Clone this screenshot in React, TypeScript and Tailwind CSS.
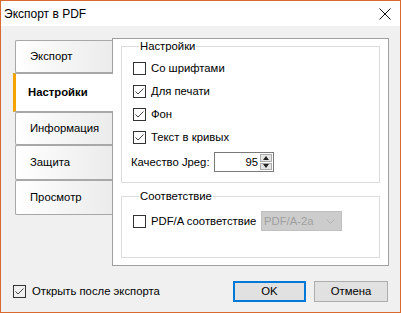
import { ReactNode } from "react";

const font = { fontFamily: '"Liberation Sans", Arial, sans-serif' };

function Check({ checked, className = "" }: { checked?: boolean; className?: string }) {
  return (
    <span
      className={`flex h-[13px] w-[13px] shrink-0 items-center justify-center border border-[#333333] ${className}`}
    >
      {checked && (
        <svg width="11" height="11" viewBox="0 0 11 11">
          <path d="M1.5 5.5 L4 8 L9.5 2.5" fill="none" stroke="#444" strokeWidth="1" />
        </svg>
      )}
    </span>
  );
}

function Row({ checked, label }: { checked?: boolean; label: string }) {
  return (
    <div className="flex h-[23px] items-center gap-[5px]">
      <Check checked={checked} className="bg-white" />
      <span>{label}</span>
    </div>
  );
}

function Group({ title, className, children }: { title: string; className: string; children: ReactNode }) {
  return (
    <fieldset className={`border border-[#dcdcdc] pl-[11px] ${className}`}>
      <legend className="ml-[6px] px-px leading-[15px]">{title}</legend>
      {children}
    </fieldset>
  );
}

const tabs = [
  { label: "Экспорт", h: "h-[33px]" },
  { label: "Настройки", h: "h-[39px]", active: true },
  { label: "Информация", h: "h-[33px]" },
  { label: "Защита", h: "h-[35px]" },
  { label: "Просмотр", h: "h-[35px]" },
];

export default function App() {
  return (
    <div
      className="flex h-[313px] w-[401px] flex-col border border-[#d9692c] text-[11.3px] text-black"
      style={font}
    >
      <div className="flex h-[25px] shrink-0 items-center justify-between bg-white pl-[3px] pr-[9px]">
        <span className="text-[12px]">Экспорт в PDF</span>
        <svg width="12" height="12" viewBox="0 0 12 12">
          <path d="M0.5 0.5 L11.5 11.5 M11.5 0.5 L0.5 11.5" stroke="#111" strokeWidth="1" />
        </svg>
      </div>

      <div className="flex flex-1 flex-col bg-[#f0f0f0] pt-[12px]">
        <div className="flex pl-[14px]">
          <div className="mt-[2px] flex w-[97px] flex-col">
            {tabs.map((t) =>
              t.active ? (
                <div
                  key={t.label}
                  className={`relative z-10 -ml-[2px] -mr-px flex ${t.h} items-center border-y border-l-[3px] border-y-[#a8a8a8] border-l-[#f5a300] bg-white pl-[12px] font-bold`}
                >
                  {t.label}
                </div>
              ) : (
                <div
                  key={t.label}
                  className={`flex ${t.h} items-center rounded-l-[2px] border border-r-0 border-[#a8a8a8] bg-gradient-to-r from-white to-[#ebebeb] pl-[14px]`}
                >
                  {t.label}
                </div>
              )
            )}
          </div>

          <div className="h-[228px] w-[277px] border border-[#a0a0a0] bg-white px-[8px]">
            <Group title="Настройки" className="h-[144px]">
              <div className="pt-[3px]">
                <Row label="Со шрифтами" />
                <Row checked label="Для печати" />
                <Row checked label="Фон" />
                <Row checked label="Текст в кривых" />
              </div>
              <div className="mt-[3px] flex h-[20px] items-center">
                <span className="-ml-[2px] w-[83px] shrink-0 whitespace-nowrap">Качество Jpeg:</span>
                <div className="flex h-[20px] w-[60px] items-center border border-[#7a7a7a] bg-white">
                  <span className="flex-1 pr-[2px] text-right">95</span>
                  <div className="mr-px flex h-[16px] w-[12px] flex-col gap-px">
                    <span className="flex flex-1 items-center justify-center border border-[#acacac] bg-[#e5e5e5]">
                      <svg width="6" height="4" viewBox="0 0 6 4">
                        <path d="M3 0 L6 4 L0 4 Z" fill="#222" />
                      </svg>
                    </span>
                    <span className="flex flex-1 items-center justify-center border border-[#acacac] bg-[#e5e5e5]">
                      <svg width="6" height="4" viewBox="0 0 6 4">
                        <path d="M0 0 L6 0 L3 4 Z" fill="#222" />
                      </svg>
                    </span>
                  </div>
                </div>
              </div>
            </Group>

            <Group title="Соответствие" className="mt-[6px] h-[69px]">
              <div className="mt-[7px] flex h-[20px] items-center">
                <Check className="bg-white" />
                <span className="ml-[5px] w-[110px] shrink-0 whitespace-nowrap">PDF/A соответствие</span>
                <div className="flex h-[20px] w-[81px] shrink-0 items-center justify-between border border-[#bfbfbf] bg-[#cccccc] pl-[2px] pr-[6px] text-[#a0a0a0]">
                  <span>PDF/A-2a</span>
                  <svg width="9" height="5" viewBox="0 0 9 5">
                    <path d="M0.5 0.5 L4.5 4.5 L8.5 0.5" fill="none" stroke="#b5b5b5" strokeWidth="1" />
                  </svg>
                </div>
              </div>
            </Group>
          </div>
        </div>

        <div className="mt-[15px] flex items-center pl-[12px] pr-[12px]">
          <Check checked />
          <span className="ml-[6px] flex-1">Открыть после экспорта</span>
          <button className="h-[21px] w-[73px] border-2 border-[#0078d7] bg-[#e1e1e1]">OK</button>
          <button className="ml-[8px] h-[21px] w-[74px] border border-[#adadad] bg-[#e1e1e1]">Отмена</button>
        </div>
      </div>
    </div>
  );
}
